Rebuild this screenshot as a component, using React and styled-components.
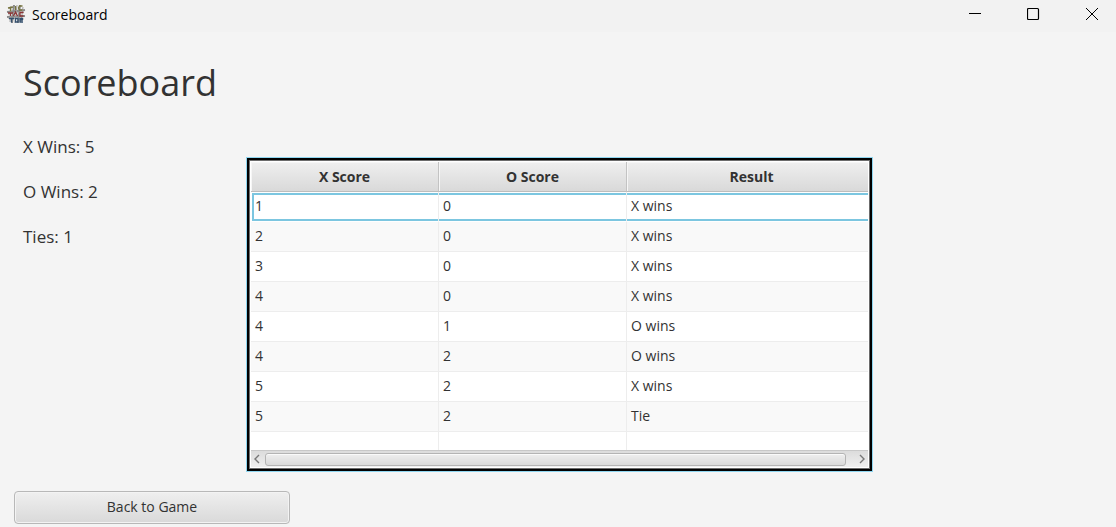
import React from "react";
import styled, { createGlobalStyle, css } from "styled-components";

const GlobalStyle = createGlobalStyle`
  *, *::before, *::after { box-sizing: border-box; }
  body {
    margin: 0;
    background: #f4f4f4;
    color: #323232;
    font-family: "Open Sans", "Noto Sans", sans-serif;
    font-size: 14px;
  }
`;

const raised = css`
  background: linear-gradient(#efefef, #d9d9d9);
`;

const Window = styled.div`
  display: flex;
  flex-direction: column;
  min-height: 100vh;
`;

const TitleBar = styled.header`
  display: flex;
  align-items: center;
  height: 32px;
  padding: 0 0 4px 6px;
  background: #f2f2f2;
  color: #000;
`;

const AppIcon = styled.svg`
  width: 20px;
  height: 20px;
  margin-right: 6px;
`;

const WindowTitle = styled.span`
  flex: 1;
  padding-top: 2px;
  font-size: 14px;
  line-height: 20px;
`;

const WindowControls = styled.div`
  display: flex;
  gap: 10px;
`;

const WindowButton = styled.button`
  display: flex;
  align-items: center;
  justify-content: center;
  width: 48px;
  height: 28px;
  padding: 0;
  border: 0;
  background: none;
  color: #000;
`;

const Content = styled.main`
  display: grid;
  grid-template-columns: 246px minmax(0, 1fr) 243px;
  flex: 1;
  align-items: start;
`;

const Summary = styled.section`
  padding: 23px 0 0 23px;
`;

const Heading = styled.h1`
  margin: 0 0 24px;
  font-size: 36px;
  font-weight: 400;
  line-height: 56px;
  white-space: nowrap;
`;

const Totals = styled.ul`
  display: grid;
  gap: 21px;
  margin: 0;
  padding: 0;
  list-style: none;
  font-size: 17px;
  line-height: 24px;
`;

const TableFrame = styled.section`
  margin-top: 125px;
  border: 1px solid #8fd6f0;
`;

const TableEdge = styled.div`
  border: 2px solid #000;
`;

const TableInner = styled.div`
  padding: 1px;
  border: 1px solid #6c6c6c;
  background: #fff;
`;

const Table = styled.table`
  width: 100%;
  border-collapse: separate;
  border-spacing: 0;
  table-layout: fixed;
`;

const Column = styled.col`
  width: ${(p) => p.$width};
`;

const HeadCell = styled.th`
  ${raised}
  height: 30px;
  padding: 0;
  border-right: 1px solid #c3c3c3;
  border-bottom: 1px solid #bdbdbd;
  box-shadow: inset 1px 1px #f6f6f6;
  font-weight: 700;
  line-height: 20px;

  &:last-child {
    padding-left: 8px;
    border-right: 0;
  }
`;

const Cell = styled.td`
  position: relative;
  height: ${(p) => (p.$filler ? 18 : 30)}px;
  padding: 0 4px 2px;
  border-right: 1px solid #ededed;
  border-bottom: ${(p) => (p.$filler ? "0" : "1px solid #ededed")};
  line-height: 20px;

  &:last-child { border-right: 0; }
`;

const Row = styled.tr`
  background: #fff;

  &:nth-child(even) { background: #f9f9f9; }

  ${(p) => p.$focused && css`
    ${Cell} { border-bottom-color: #fff; }
    ${Cell}::after {
      content: "";
      position: absolute;
      inset: 1px 0 0;
      border: solid #7cc6e0;
      border-width: 2px 0;
    }
    ${Cell}:first-child::after {
      left: 1px;
      border-left-width: 2px;
    }
  `}
`;

const ScrollBar = styled.div`
  display: flex;
  align-items: center;
  height: 17px;
  border-top: 1px solid #c8c8c8;
  background: linear-gradient(#dcdcdc, #efefef);
`;

const ScrollArrow = styled.button`
  display: flex;
  align-items: center;
  justify-content: ${(p) => (p.$end ? "flex-end" : "flex-start")};
  width: ${(p) => (p.$end ? 22 : 14)}px;
  height: 14px;
  padding: 0 3px;
  border: 0;
  background: none;
  color: #777;
`;

const ScrollThumb = styled.div`
  ${raised}
  flex: 1;
  height: 13px;
  border: 1px solid #b4b4b4;
  border-radius: 3px;
  box-shadow: inset 0 1px #fafafa;
`;

const Footer = styled.footer`
  padding: 19px 14px 4px;
`;

const BackButton = styled.button`
  ${raised}
  display: block;
  width: 276px;
  height: 33px;
  padding: 0 0 1px;
  border: 1px solid #b8b8b8;
  border-radius: 4px;
  box-shadow: inset 0 0 0 1px #f3f3f3;
  color: #323232;
  font: inherit;
  line-height: 20px;
`;

const columns = [
  { label: "X Score", width: "188px" },
  { label: "O Score", width: "188px" },
  { label: "Result", width: "auto" },
];

const games = [
  [1, 0, "X wins"],
  [2, 0, "X wins"],
  [3, 0, "X wins"],
  [4, 0, "X wins"],
  [4, 1, "O wins"],
  [4, 2, "O wins"],
  [5, 2, "X wins"],
  [5, 2, "Tie"],
];

const totals = ["X Wins: 5", "O Wins: 2", "Ties: 1"];

function Logo() {
  return (
    <AppIcon viewBox="0 0 20 20" aria-hidden="true">
      <g fill="none" stroke="#8a8a8a" strokeWidth="2">
        <path d="M8 1 6 19M14 1 12 19M1 8 19 6M1 13 19 12" />
      </g>
      <g fill="none" stroke="#a2a2a2" strokeWidth="1">
        <path d="M5 2 4 18M17 3 15 18M2 10 18 8M2 14 18 15M11 1 9 19" />
      </g>
      <g fill="none" strokeWidth="1.3">
        <path stroke="#77743f" d="M2 4 7 3M4.500 3.500v4M9.500 2v4M16.500 2h-3l-1 2 1 2h3" />
        <path stroke="#8a3535" d="M2 9h5M4.500 9v3M7.500 12l2-4 2 4M17.500 8.500h-3.500v3.500h3.500" />
        <path stroke="#34506e" d="M3 14.500h5M5.500 14.500v4M9.500 14.500h2.500v3.500h-2.500zM17 14.500h-3v3.500h3M14 16h3" />
      </g>
    </AppIcon>
  );
}

function Glyph({ d, children }) {
  return (
    <svg width="14" height="14" viewBox="0 0 14 14" fill="none" stroke="currentColor" aria-hidden="true">
      {d ? <path d={d} /> : children}
    </svg>
  );
}

function Chevron({ d }) {
  return (
    <svg width="6" height="10" viewBox="0 0 6 10" fill="none" stroke="currentColor" strokeWidth="1.4" aria-hidden="true">
      <path d={d} />
    </svg>
  );
}

export default function App() {
  return (
    <Window>
      <GlobalStyle />
      <TitleBar>
        <Logo />
        <WindowTitle>Scoreboard</WindowTitle>
        <WindowControls>
          <WindowButton type="button" aria-label="Minimize">
            <Glyph d="M0 6.500h12" />
          </WindowButton>
          <WindowButton type="button" aria-label="Maximize">
            <Glyph><rect x="0.500" y="1.500" width="11" height="11" rx="1" strokeWidth="1.200" /></Glyph>
          </WindowButton>
          <WindowButton type="button" aria-label="Close">
            <Glyph d="M1 1l12 12M13 1 1 13" />
          </WindowButton>
        </WindowControls>
      </TitleBar>
      <Content>
        <Summary>
          <Heading>Scoreboard</Heading>
          <Totals>
            {totals.map((text) => <li key={text}>{text}</li>)}
          </Totals>
        </Summary>
        <TableFrame>
          <TableEdge>
            <TableInner>
              <Table>
                <colgroup>
                  {columns.map((c) => <Column key={c.label} $width={c.width} />)}
                </colgroup>
                <thead>
                  <tr>{columns.map((c) => <HeadCell key={c.label} scope="col">{c.label}</HeadCell>)}</tr>
                </thead>
                <tbody>
                  {games.map((game, i) => (
                    <Row key={i} $focused={i === 0}>
                      {game.map((value, j) => <Cell key={j}>{value}</Cell>)}
                    </Row>
                  ))}
                  <Row aria-hidden="true">
                    {columns.map((c) => <Cell key={c.label} $filler />)}
                  </Row>
                </tbody>
              </Table>
              <ScrollBar>
                <ScrollArrow type="button" aria-label="Scroll left"><Chevron d="M5 1 1 5l4 4" /></ScrollArrow>
                <ScrollThumb />
                <ScrollArrow type="button" aria-label="Scroll right" $end><Chevron d="M1 1l4 4-4 4" /></ScrollArrow>
              </ScrollBar>
            </TableInner>
          </TableEdge>
        </TableFrame>
      </Content>
      <Footer>
        <BackButton type="button">Back to Game</BackButton>
      </Footer>
    </Window>
  );
}
